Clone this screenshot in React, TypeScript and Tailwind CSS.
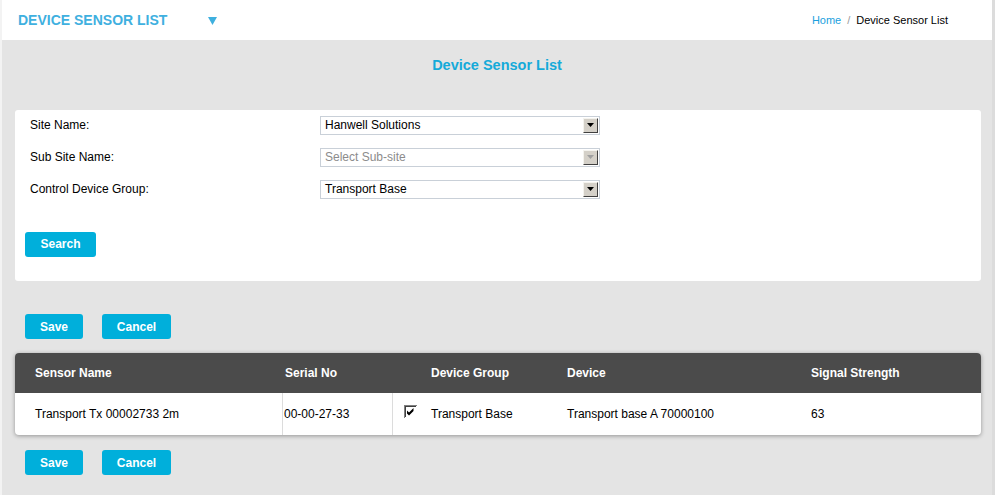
import type { ReactNode } from "react";

const FONT = { fontFamily: '"Liberation Sans", Arial, sans-serif' };

function SelectBox({ value, disabled }: { value: string; disabled?: boolean }) {
  return (
    <div className="flex h-[19px] w-[280px] items-center border border-[#c9d0d8] bg-white">
      <span
        className={`flex-1 pl-[4px] text-[12px] leading-none ${disabled ? "text-[#8c8c8c]" : "text-black"}`}
      >
        {value}
      </span>
      <div className="mr-[1px] flex h-[15px] w-[15px] items-center justify-center border border-t-[#f4f3ee] border-l-[#f4f3ee] border-r-[#404040] border-b-[#404040] bg-[#d4d0c8]">
        <svg width="7" height="4" viewBox="0 0 7 4">
          <path d="M0 0h7L3.5 4z" fill={disabled ? "#a0a0a0" : "#000"} />
        </svg>
      </div>
    </div>
  );
}

function BlueButton({ children, w }: { children: ReactNode; w: string }) {
  return (
    <button
      className={`${w} h-[25px] rounded-[3px] bg-[#00afdb] text-[12px] font-bold text-white`}
    >
      {children}
    </button>
  );
}

function ButtonRow() {
  return (
    <div className="flex gap-[19px] pl-[23px]">
      <BlueButton w="w-[58px]">Save</BlueButton>
      <BlueButton w="w-[69px]">Cancel</BlueButton>
    </div>
  );
}

const fields = [
  { label: "Site Name:", value: "Hanwell Solutions" },
  { label: "Sub Site Name:", value: "Select Sub-site", disabled: true },
  { label: "Control Device Group:", value: "Transport Base" },
];

export default function App() {
  return (
    <div
      style={FONT}
      className="flex h-[495px] w-[995px] flex-col overflow-hidden border-l-2 border-r-[3px] border-l-[#f3f3f3] border-r-[#dcdcdc] bg-[#e4e4e4]"
    >
      <header className="flex h-[40px] shrink-0 items-center justify-between bg-white pl-[16px] pr-[44px]">
        <div className="flex items-center">
          <span className="text-[14px] font-bold text-[#3fb0df]">DEVICE SENSOR LIST</span>
          <svg className="ml-[41px] mt-[1px]" width="9" height="8" viewBox="0 0 9 8">
            <path d="M0 0h9L4.5 8z" fill="#3fb0df" />
          </svg>
        </div>
        <div className="flex items-center gap-[6px] text-[11px]">
          <span className="text-[#1b9fde]">Home</span>
          <span className="text-[#9a9a9a]">/</span>
          <span className="text-black">Device Sensor List</span>
        </div>
      </header>

      <h1 className="mt-[17px] h-[16px] text-center text-[14.5px] font-bold leading-[16px] text-[#15aad9]">
        Device Sensor List
      </h1>

      <section className="ml-[13px] mr-[11px] mt-[37px] h-[171px] rounded-[3px] bg-white">
        <div className="flex flex-col gap-[2px]">
          {fields.map((f) => (
            <div key={f.label} className="flex h-[30px] items-center">
              <span className="w-[305px] pl-[15px] text-[12px] text-black">{f.label}</span>
              <SelectBox value={f.value} disabled={f.disabled} />
            </div>
          ))}
        </div>
        <div className="mt-[27px] pl-[10px]">
          <button className="h-[25px] w-[71px] rounded-[3px] bg-[#00afdb] text-[12px] font-bold text-white">
            Search
          </button>
        </div>
      </section>

      <div className="mt-[33px]">
        <ButtonRow />
      </div>

      <div className="ml-[13px] mr-[11px] mt-[14px] overflow-hidden rounded-[4px] bg-white shadow-[0_1px_4px_rgba(0,0,0,0.35)]">
        <div className="flex h-[40px] items-center bg-[#4b4b4b] text-[12px] font-bold text-white">
          <span className="w-[268px] pl-[20px]">Sensor Name</span>
          <span className="w-[110px] pl-[2px]">Serial No</span>
          <span className="w-[164px] pl-[38px]">Device Group</span>
          <span className="w-[244px] pl-[10px]">Device</span>
          <span className="flex-1 pl-[10px]">Signal Strength</span>
        </div>
        <div className="flex h-[42px] items-stretch text-[12px] text-black">
          <span className="flex w-[268px] items-center border-r border-[#dcdcdc] pl-[20px]">
            Transport Tx 00002733 2m
          </span>
          <span className="flex w-[110px] items-center border-r border-[#dcdcdc] pl-[1px]">
            00-00-27-33
          </span>
          <span className="flex w-[164px] items-center pl-[11px]">
            <svg className="mb-[5px]" width="13" height="13" viewBox="0 0 13 13">
              <rect x="0" y="0" width="13" height="13" fill="#808080" />
              <rect x="1" y="1" width="12" height="12" fill="#fff" />
              <rect x="1" y="1" width="11" height="11" fill="#404040" />
              <rect x="2" y="2" width="10" height="10" fill="#fff" />
              <path d="M3 5.5l2 2 4.5-4.5v3l-4.5 4.5-2-2z" fill="#000" />
            </svg>
            <span className="ml-[14px]">Transport Base</span>
          </span>
          <span className="flex w-[244px] items-center pl-[10px]">Transport base A 70000100</span>
          <span className="flex flex-1 items-center pl-[10px]">63</span>
        </div>
      </div>

      <div className="mt-[15px]">
        <ButtonRow />
      </div>
    </div>
  );
}
